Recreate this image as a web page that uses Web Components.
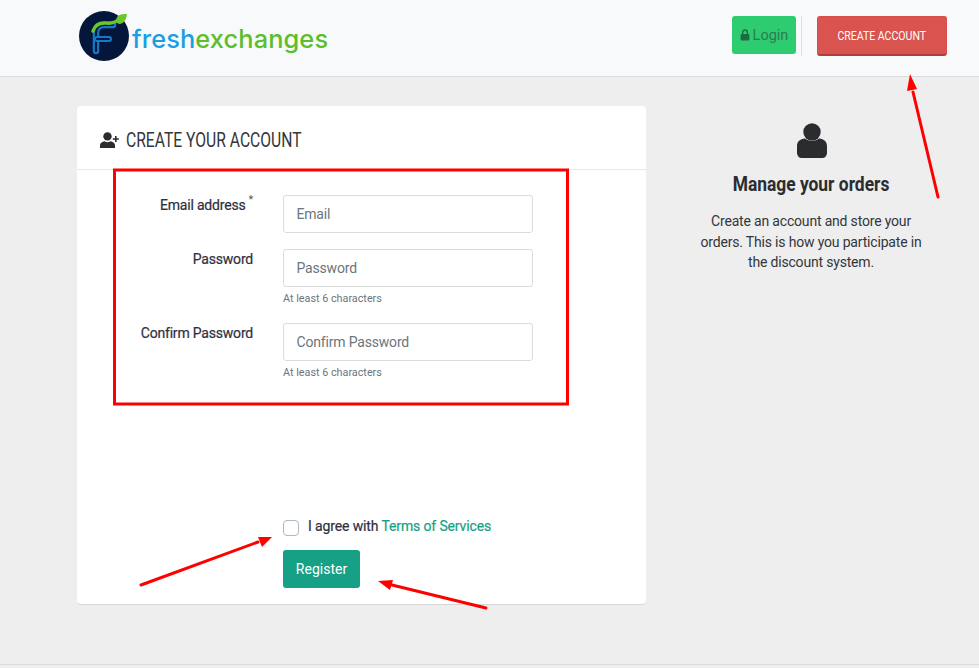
<!DOCTYPE html>
<html>
<head>
<meta charset="utf-8">
<title>Create account</title>
<style>
html, body { margin: 0; padding: 0; }
body { background: #eee; font-family: Roboto, "Liberation Sans", sans-serif; font-size: 14px; color: #2d2d2f; height: 668px; overflow: hidden; position: relative; }
</style>
</head>
<body>
<site-header></site-header>
<page-main>
    <register-card slot="card">
        <form-field label="Email address" required placeholder="Email"></form-field>
        <form-field label="Password" placeholder="Password" help="At least 6 characters"></form-field>
        <form-field label="Confirm Password" placeholder="Confirm Password" help="At least 6 characters"></form-field>
    </register-card>
    <side-info slot="side"></side-info>
</page-main>
<site-footer></site-footer>
<red-marks></red-marks>

<script>
class siteHeader extends HTMLElement{
    constructor(){
        super();
        this.attachShadow({mode: "open"});
        this.shadowRoot.innerHTML = `
        <style>
        :host{
            display: flex;
            box-sizing: border-box;
            height: 77px;
            padding: 11px 32px 0 79px;
            justify-content: space-between;
            align-items: flex-start;
            background: #f8f9fb;
            border-bottom: 1px solid #dcdcdc;
        }
        .logo{ display: flex; align-items: flex-start; }
        .logo svg{ display: block; }
        .logo__text{
            font-family: Inter, sans-serif;
            font-size: 25.400px;
            font-weight: 500;
            line-height: 28px;
            margin: 14px 0 0 3px;
            letter-spacing: .1px;
            color: #5cbf2a;
        }
        .logo__text b{ font-weight: 500; color: #1c9fe0; }
        .actions{ display: flex; align-items: flex-start; padding-top: 5px; }
        .login{
            box-sizing: border-box;
            width: 64px;
            height: 38px;
            display: flex;
            align-items: center;
            justify-content: center;
            gap: 3px;
            background: #2ecc71;
            border-radius: 3px;
            color: #2c7a52;
            font-size: 14.500px;
        }
        .sep{ width: 1px; height: 40px; background: #dedede; margin: 0 15px 0 5px; }
        .create{
            box-sizing: border-box;
            width: 130px;
            height: 40px;
            display: flex;
            align-items: center;
            justify-content: center;
            background: #d9534f;
            border: 1px solid #d64f4c;
            border-bottom: 2px solid #ac3f3c;
            border-radius: 3px;
            color: #fff;
            font-size: 13px;
        }
        .create span{ display: inline-block; transform: scaleX(.81); white-space: nowrap; }
        </style>
        <div class="logo">
            <svg width="50" height="50" viewBox="0 0 50 50" style="overflow:visible">
                <circle cx="25" cy="25" r="25" fill="#04173a"/>
                <path d="M17 40 V22 Q17 14 25 14 H34" fill="none" stroke="#1479c9" stroke-width="6.500" stroke-linecap="round"/>
                <path d="M17 40 V22 Q17 14 25 14 H34" fill="none" stroke="#04173a" stroke-width="2.200" stroke-linecap="round"/>
                <path d="M18 28 H30" fill="none" stroke="#1479c9" stroke-width="6" stroke-linecap="round"/>
                <path d="M18 28 H30" fill="none" stroke="#04173a" stroke-width="1.800" stroke-linecap="round"/>
                <path d="M14 20 Q17 11 27 12 Q36 13 41 7" fill="none" stroke="#6cc52e" stroke-width="3.500" stroke-linecap="round"/>
                <path d="M37 10 Q37 2 48 3 Q47 12 41 13 Q38 13 37 10 Z" fill="#6cc52e"/>
            </svg>
            <div class="logo__text"><b>fresh</b>exchanges</div>
        </div>
        <div class="actions">
            <div class="login">
                <svg width="10" height="12" viewBox="0 0 10 12"><path d="M2.600 5V3.400a2.400 2.400 0 0 1 4.800 0V5" fill="none" stroke="#1f6b41" stroke-width="1.400"/><rect x="0.600" y="5" width="8.800" height="6.600" rx="1" fill="#1f6b41"/></svg>
                <span>Login</span>
            </div>
            <div class="sep"></div>
            <div class="create"><span>CREATE ACCOUNT</span></div>
        </div>
        `;
    }
}
customElements.define("site-header", siteHeader);

class pageMain extends HTMLElement{
    constructor(){
        super();
        this.attachShadow({mode: "open"});
        this.shadowRoot.innerHTML = `
        <style>
        :host{
            display: grid;
            grid-template-columns: 569px 250px;
            column-gap: 40px;
            padding: 29px 0 0 77px;
        }
        </style>
        <slot name="card"></slot>
        <slot name="side"></slot>
        `;
    }
}
customElements.define("page-main", pageMain);

class registerCard extends HTMLElement{
    constructor(){
        super();
        this.attachShadow({mode: "open"});
        this.shadowRoot.innerHTML = `
        <style>
        :host{
            display: block;
            box-sizing: border-box;
            height: 499px;
            background: #fff;
            border-radius: 4px;
            border-bottom: 1px solid #d6d6d6;
        }
        .card__head{
            box-sizing: border-box;
            height: 64px;
            padding: 4px 0 0 23px;
            display: flex;
            align-items: center;
            gap: 7px;
            border-bottom: 1px solid #e9e9e9;
        }
        .card__title{
            margin: 0;
            font-size: 20px;
            font-weight: 400;
            transform: scaleX(.783);
            transform-origin: left center;
            white-space: nowrap;
            color: #33363b;
        }
        .card__fields{ padding-top: 25px; height: 348px; box-sizing: border-box; }
        .agree{
            margin-left: 206px;
            display: flex;
            align-items: flex-start;
            gap: 9px;
            color: #2d3040;
            letter-spacing: -.13px;
            -webkit-text-stroke: .2px currentColor;
            line-height: 16px;
        }
        .agree__box{
            box-sizing: border-box;
            width: 16px;
            height: 16px;
            margin-top: 2px;
            background: #fff;
            border: 1px solid #adb8c0;
            border-radius: 4px;
        }
        .agree a{ color: #16a085; text-decoration: none; }
        .register{
            margin: 14px 0 0 206px;
            box-sizing: border-box;
            width: 77px;
            height: 38px;
            padding-bottom: 1px;
            display: flex;
            align-items: center;
            justify-content: center;
            background: #16a085;
            color: #fff;
            border-radius: 3px;
            font-size: 14px;
        }
        </style>
        <div class="card__head">
            <svg width="19" height="16" viewBox="0 0 19 16"><circle cx="7.500" cy="4.400" r="4.200" fill="#2d2a30"/><path d="M0 16v-2.600c0-2.400 2-3.400 4.600-4.100 1.800 1.200 4 1.200 5.800 0 2.600.7 4.600 1.700 4.600 4.100V16z" fill="#2d2a30"/><path d="M15.800 4v6M12.800 7h6" stroke="#2d2a30" stroke-width="1.600"/></svg>
            <h2 class="card__title">CREATE YOUR ACCOUNT</h2>
        </div>
        <div class="card__fields"><slot></slot></div>
        <div class="agree">
            <span class="agree__box"></span>
            <span>I agree with <a href="#">Terms of Services</a></span>
        </div>
        <div class="register">Register</div>
        `;
    }
}
customElements.define("register-card", registerCard);

class formField extends HTMLElement{
    constructor(){
        super();
        this.attachShadow({mode: "open"});
    }
    connectedCallback(){
        const help = this.getAttribute("help");
        const mark = this.hasAttribute("required") ? `<sup>*</sup>` : "";
        this.shadowRoot.innerHTML = `
        <style>
        :host{
            display: grid;
            grid-template-columns: 176px 250px;
            column-gap: 30px;
            margin-bottom: 16px;
        }
        label{
            text-align: right;
            letter-spacing: -.2px;
            -webkit-text-stroke: .2px currentColor;
            line-height: 20px;
            color: #2d3040;
            white-space: nowrap;
        }
        sup{ color: #555; font-size: 11px; line-height: 0; font-weight: 400; position: relative; top: -1px; vertical-align: super; margin-left: 3px; -webkit-text-stroke: 0; }
        input{
            display: block;
            box-sizing: border-box;
            width: 250px;
            height: 38px;
            padding: 0 12.500px;
            font: 400 14px Roboto, sans-serif;
            letter-spacing: -.18px;
            border: 1px solid #dcdcdc;
            border-radius: 3px;
            background: #fff;
            outline: none;
        }
        input::placeholder{ color: #6c757d; opacity: 1; }
        small{
            display: block;
            font-size: 10.800px;
            line-height: 12px;
            margin-top: 6px;
            margin-bottom: 2px;
            color: #6c757d;
        }
        </style>
        <label>${this.getAttribute("label")}${mark}</label>
        <div>
            <input type="text" placeholder="${this.getAttribute("placeholder")}">
            ${help ? `<small>${help}</small>` : ""}
        </div>
        `;
    }
}
customElements.define("form-field", formField);

class sideInfo extends HTMLElement{
    constructor(){
        super();
        this.attachShadow({mode: "open"});
        this.shadowRoot.innerHTML = `
        <style>
        :host{ display: block; text-align: center; padding-top: 17px; color: #2b2c30; }
        svg{ display: block; margin: 0 auto; position: relative; left: 1px; }
        h3{ margin: 14px 0 0; font-size: 20px; line-height: 24px; font-weight: 700; transform: scaleX(.87); white-space: nowrap; }
        p{ margin: 15px 0 0; line-height: 20.500px; letter-spacing: -.18px; color: #33363b; }
        </style>
        <svg width="30" height="35" viewBox="0 0 30 35">
            <circle cx="15" cy="9" r="8.700" fill="#2b2c30"/>
            <path d="M0 29.500v-6.500C0 18.500 3 16 7.800 15.500c4 3.300 10.400 3.300 14.400 0C27 16 30 18.500 30 23v6.500c0 2.700-1.800 5.500-4 5.500H4c-2.200 0-4-2.800-4-5.500z" fill="#2b2c30"/>
        </svg>
        <h3>Manage your orders</h3>
        <p>Create an account and store your<br>orders. This is how you participate in<br>the discount system.</p>
        `;
    }
}
customElements.define("side-info", sideInfo);

class siteFooter extends HTMLElement{
    constructor(){
        super();
        this.attachShadow({mode: "open"});
        this.shadowRoot.innerHTML = `
        <style>
        :host{ display: block; margin-top: 59px; height: 4px; background: #eee; border-top: 1px solid #dcdcdc; }
        </style>
        `;
    }
}
customElements.define("site-footer", siteFooter);

class redMarks extends HTMLElement{
    constructor(){
        super();
        this.attachShadow({mode: "open"});
        this.shadowRoot.innerHTML = `
        <style>
        :host{ position: absolute; left: 0; top: 0; width: 979px; height: 668px; pointer-events: none; }
        svg{ display: block; }
        </style>
        <svg width="979" height="668" viewBox="0 0 979 668" fill="#f00" stroke="none">
            <rect x="114.500" y="170" width="453" height="234" fill="none" stroke="#f00" stroke-width="3"/>
            <path d="M938 197 L913 92" stroke="#f00" stroke-width="3" stroke-linecap="round"/>
            <path d="M910 74 L917 89 L907 91 Z"/>
            <path d="M141 585 L258 542" stroke="#f00" stroke-width="3" stroke-linecap="round"/>
            <path d="M272 537 L262 547 L258 537 Z"/>
            <path d="M486 608 L392 585" stroke="#f00" stroke-width="3" stroke-linecap="round"/>
            <path d="M378 581 L393 580 L390 590 Z"/>
        </svg>
        `;
    }
}
customElements.define("red-marks", redMarks);
</script>
</body>
</html>
